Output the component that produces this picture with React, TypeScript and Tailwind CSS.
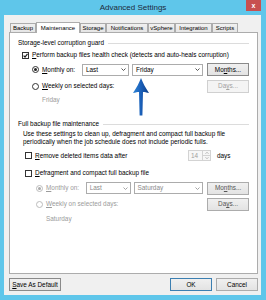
import React from 'react';

type Ctl = { disabled?: boolean };

// small keyboard-accelerator underline helper
function Acc({ k, rest }: { k: string; rest: string }) {
  return (
    <span>
      <span className="underline">{k}</span>
      {rest}
    </span>
  );
}

function Check({ checked, disabled }: { checked?: boolean } & Ctl) {
  return (
    <span
      className={`w-[7px] h-[7px] border bg-white flex items-center justify-center shrink-0 ${
        disabled ? 'border-[#bcbcbc]' : 'border-[#333333]'
      }`}
    >
      {checked && (
        <svg width="5" height="5" viewBox="0 0 5 5">
          <path d="M0.6 2.6 L2 4 L4.5 0.8" stroke="#1f1f1f" strokeWidth="1.2" fill="none" />
        </svg>
      )}
    </span>
  );
}

function Radio({ checked, disabled }: { checked?: boolean } & Ctl) {
  return (
    <span
      className={`w-[7px] h-[7px] rounded-full border bg-white flex items-center justify-center shrink-0 ${
        disabled ? 'border-[#bcbcbc]' : 'border-[#333333]'
      }`}
    >
      {checked && (
        <span className={`w-[3px] h-[3px] rounded-full ${disabled ? 'bg-[#a8a8a8]' : 'bg-[#222222]'}`} />
      )}
    </span>
  );
}

function Select({ value, width, disabled }: { value: string; width: string } & Ctl) {
  return (
    <div
      className={`${width} h-[12px] border border-[#acacac] bg-white flex items-center justify-between pl-[3px] pr-[2px] ${
        disabled ? 'text-[#8a8a8a]' : 'text-black'
      }`}
    >
      <span>{value}</span>
      <svg width="5" height="3" viewBox="0 0 5 3">
        <path d="M0.5 0.5 L2.5 2.5 L4.5 0.5" stroke={disabled ? '#9a9a9a' : '#444444'} strokeWidth="0.9" fill="none" />
      </svg>
    </div>
  );
}

function Btn({
  children,
  width,
  disabled,
  strong,
  blue,
}: { children: React.ReactNode; width: string; strong?: boolean; blue?: boolean } & Ctl) {
  const border = blue
    ? 'border-[#3c7fb1]'
    : disabled
    ? 'border-[#d0d0d0]'
    : strong
    ? 'border-[#8a8a8a]'
    : 'border-[#acacac]';
  return (
    <div
      className={`${width} h-[13px] border ${border} flex items-center justify-center ${
        disabled ? 'bg-[#f4f4f4] text-[#a3a3a3]' : 'bg-gradient-to-b from-[#f0f0f0] to-[#e3e3e3] text-black'
      }`}
    >
      {children}
    </div>
  );
}

function GroupTitle({ text }: { text: string }) {
  return (
    <div className="h-[8px] flex items-center gap-[4px]">
      <span className="whitespace-nowrap">{text}</span>
      <span className="flex-1 h-px bg-[#dcdcdc]" />
    </div>
  );
}

const tabs = [
  { name: 'Backup', w: 'w-[26px]' },
  { name: 'Maintenance', w: 'w-[44px]', active: true },
  { name: 'Storage', w: 'w-[26px]' },
  { name: 'Notifications', w: 'w-[42px]' },
  { name: 'vSphere', w: 'w-[27px]' },
  { name: 'Integration', w: 'w-[37px]' },
  { name: 'Scripts', w: 'w-[26px]' },
];

function Arrow() {
  return (
    <svg width="18" height="38" viewBox="0 0 18 38" className="absolute left-[122px] top-[45px]">
      <defs>
        <linearGradient id="ag" x1="0" y1="0" x2="1" y2="0">
          <stop offset="0" stopColor="#2f86d8" />
          <stop offset="0.5" stopColor="#1a5fb8" />
          <stop offset="1" stopColor="#0d3f8a" />
        </linearGradient>
      </defs>
      <path
        d="M9 0 C10.5 4 13.5 10 17 15 C14.5 14.3 12.3 13.9 11 13.9 L10.4 37.5 L7.6 37.5 L7 13.9 C5.7 13.9 3.5 14.3 1 15 C4.5 10 7.5 4 9 0 Z"
        fill="url(#ag)"
      />
    </svg>
  );
}

export default function App() {
  return (
    <div className="w-[266px] h-[300px] bg-[#5fc6ea] flex flex-col font-['Liberation_Sans',Arial,sans-serif] text-[6.4px] leading-[8px] text-black overflow-hidden">
      {/* title bar */}
      <div className="h-[15px] flex items-start">
        <div className="flex-1 h-[15px] flex items-center justify-center pl-[20px] text-[8px] text-[#1c2a3a]">
          Advanced Settings
        </div>
        <div className="w-[15px] h-[11px] mr-[5px] bg-[#c75050] flex items-center justify-center text-white text-[7px] font-bold">
          x
        </div>
      </div>

      {/* window body */}
      <div className="ml-[4px] mr-[5px] h-[280px] bg-[#f0f0f0] pt-[7px] pb-[4px] flex flex-col">
        {/* tabs */}
        <div className="h-[10px] ml-[6px] flex items-end relative z-10 text-[6px]">
          {tabs.map((t) =>
            t.active ? (
              <div
                key={t.name}
                className={`${t.w} h-[11px] -mb-px bg-white border border-b-0 border-[#acacac] flex items-center justify-center`}
              >
                {t.name}
              </div>
            ) : (
              <div
                key={t.name}
                className={`${t.w} h-[9px] bg-gradient-to-b from-[#f0f0f0] to-[#e5e5e5] border border-b-0 border-[#acacac] flex items-center justify-center`}
              >
                {t.name}
              </div>
            )
          )}
        </div>

        {/* tab panel */}
        <div className="ml-[5px] w-[249px] h-[243px] bg-white border border-[#acacac] relative pl-[8px] pr-[8px]">
          <Arrow />
          <div className="mt-[6px]">
            <GroupTitle text="Storage-level corruption guard" />
          </div>
          <div className="mt-[4px] h-[8px] flex items-center ml-[4px] gap-[3px]">
            <Check checked />
            <span>
              <Acc k="P" rest="erform backup files health check (detects and auto-heals corruption)" />
            </span>
          </div>
          <div className="mt-[4px] h-[13px] flex items-center">
            <div className="ml-[14px] w-[50px] flex items-center gap-[3px]">
              <Radio checked />
              <Acc k="M" rest="onthly on:" />
            </div>
            <Select value="Last" width="w-[47px]" />
            <div className="w-[3px]" />
            <Select value="Friday" width="w-[71px]" />
            <div className="w-[4px]" />
            <Btn width="w-[42px]" strong>
              <span>
                Mo<span className="underline">n</span>ths...
              </span>
            </Btn>
          </div>
          <div className="mt-[4px] h-[12px] flex items-center justify-between">
            <div className="ml-[14px] flex items-center gap-[3px]">
              <Radio />
              <Acc k="W" rest="eekly on selected days:" />
            </div>
            <Btn width="w-[42px]" disabled>
              <span>
                Da<span className="underline">y</span>s...
              </span>
            </Btn>
          </div>
          <div className="mt-[4px] h-[8px] ml-[24px] text-[#9b9b9b]">Friday</div>

          <div className="mt-[16px]">
            <GroupTitle text="Full backup file maintenance" />
          </div>
          <div className="mt-[2px] ml-[5px] leading-[8px]">
            <div>Use these settings to clean up, defragment and compact full backup file</div>
            <div>periodically when the job schedule does not include periodic fulls.</div>
          </div>
          <div className="mt-[4px] h-[11px] flex items-center">
            <div className="ml-[7px] w-[163px] flex items-center gap-[3px]">
              <Check />
              <Acc k="R" rest="emove deleted items data after" />
            </div>
            <div className="w-[23px] h-[11px] border border-[#d3d3d3] bg-[#f7f7f7] flex items-center justify-between text-[#a0a0a0]">
              <span className="pl-[2px]">14</span>
              <div className="w-[8px] h-[9px] border-l border-[#d3d3d3] flex flex-col">
                <div className="flex-1 flex items-center justify-center border-b border-[#d3d3d3]">
                  <svg width="4" height="2" viewBox="0 0 4 2">
                    <path d="M0.3 1.8 L2 0.3 L3.7 1.8" stroke="#a8a8a8" strokeWidth="0.7" fill="none" />
                  </svg>
                </div>
                <div className="flex-1 flex items-center justify-center">
                  <svg width="4" height="2" viewBox="0 0 4 2">
                    <path d="M0.3 0.2 L2 1.7 L3.7 0.2" stroke="#a8a8a8" strokeWidth="0.7" fill="none" />
                  </svg>
                </div>
              </div>
            </div>
            <span className="ml-[6px]">days</span>
          </div>
          <div className="mt-[8px] h-[8px] flex items-center ml-[7px] gap-[3px]">
            <Check />
            <Acc k="D" rest="efragment and compact full backup file" />
          </div>
          <div className="mt-[5px] h-[12px] flex items-center">
            <div className="ml-[18px] w-[50px] flex items-center gap-[3px] text-[#9b9b9b]">
              <Radio checked disabled />
              <Acc k="M" rest="onthly on:" />
            </div>
            <Select value="Last" width="w-[45px]" disabled />
            <div className="w-[3px]" />
            <Select value="Saturday" width="w-[70px]" disabled />
            <div className="w-[4px]" />
            <Btn width="w-[42px]">
              <span className="text-[#555555]">
                Mo<span className="underline">n</span>ths...
              </span>
            </Btn>
          </div>
          <div className="mt-[4px] h-[12px] flex items-center justify-between">
            <div className="ml-[18px] flex items-center gap-[3px] text-[#9b9b9b]">
              <Radio disabled />
              <Acc k="W" rest="eekly on selected days:" />
            </div>
            <Btn width="w-[42px]">
              <span className="text-[#555555]">
                Da<span className="underline">y</span>s...
              </span>
            </Btn>
          </div>
          <div className="mt-[5px] h-[8px] ml-[28px] text-[#9b9b9b]">Saturday</div>
        </div>

        {/* bottom buttons */}
        <div className="mt-[4px] ml-[5px] mr-[3px] flex items-center">
          <Btn width="w-[52px]" strong>
            <Acc k="S" rest="ave As Default" />
          </Btn>
          <div className="flex-1" />
          <Btn width="w-[42px]" blue>
            OK
          </Btn>
          <div className="w-[4px]" />
          <Btn width="w-[42px]">Cancel</Btn>
        </div>
      </div>
    </div>
  );
}
